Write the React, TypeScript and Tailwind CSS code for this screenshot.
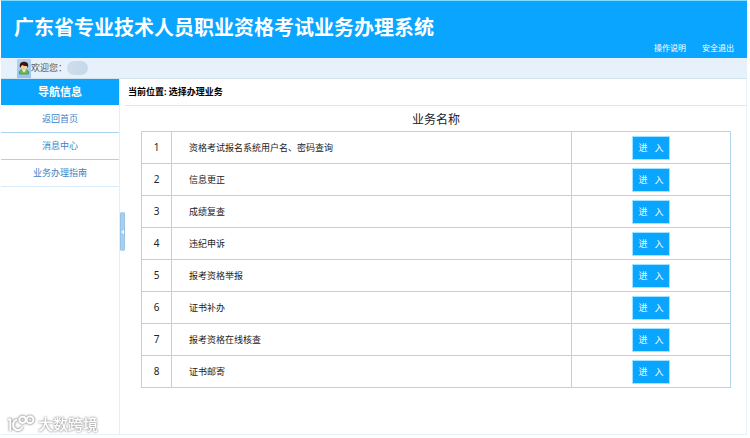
const navItems = ["返回首页", "消息中心", "业务办理指南"];

const services = [
  "资格考试报名系统用户名、密码查询",
  "信息更正",
  "成绩复查",
  "违纪申诉",
  "报考资格举报",
  "证书补办",
  "报考资格在线核查",
  "证书邮寄",
];

function Avatar() {
  return (
    <span className="flex h-[19px] w-[14px] items-center justify-center bg-gradient-to-b from-[#b4d4f6] to-[#98c2f0]">
      <svg viewBox="0 0 12 14" className="h-[14px] w-[12px]" aria-hidden="true">
        <path d="M1.500 13V11c0-1.600 1.800-2.500 4.500-2.500s4.500.9 4.500 2.500v2z" fill="#6cbf45" stroke="#2f7f35" strokeWidth=".6" />
        <path d="M4 9L6 11.500 8 9z" fill="#fff3d8" />
        <ellipse cx="6" cy="6" rx="2.900" ry="3.300" fill="#f8cb98" />
        <path d="M2.200 7C.8 2.800 2.800.8 6 .8s5.200 2 3.800 6.200L9 5C7 5.200 5.300 4.700 4.500 3.900L3 5.200z" fill="#3d150d" />
      </svg>
    </span>
  );
}

function Watermark() {
  return (
    <div className="absolute bottom-[5px] left-[7px] flex items-center gap-[3px] drop-shadow-[0_0_1px_#999]">
      <svg viewBox="0 0 28 18" className="h-[18px] w-[28px]" fill="none" aria-hidden="true">
        <g stroke="#bdbdbd" strokeWidth="2.800">
          <path d="M1 4.500h2.300V16" />
          <path d="M10 4.500C5.500 6 5 11 7.500 13.500s6.500 2 8-1.500" />
          <circle cx="15.500" cy="4.800" r="3.200" />
          <circle cx="23" cy="4.800" r="3.400" />
        </g>
        <g stroke="#fff" strokeWidth="1.800">
          <path d="M1 4.500h2.300V16" />
          <path d="M10 4.500C5.500 6 5 11 7.500 13.500s6.500 2 8-1.500" />
          <circle cx="15.500" cy="4.800" r="3.200" />
          <circle cx="23" cy="4.800" r="3.400" />
        </g>
      </svg>
      <span className="text-[15px] leading-[18px] font-medium text-white [text-shadow:0_0_1px_#aaa]">
        大数跨境
      </span>
    </div>
  );
}

export default function App() {
  return (
    <div className="relative flex min-h-screen flex-col bg-white pr-[3px] pb-[3px] pl-px font-['Noto_Sans','Noto_Sans_CJK_SC',sans-serif] text-[9px] text-[#222]">
      <header className="flex h-[58px] items-stretch justify-between border-t border-[#7fdcff] bg-[#0aa5ff] pr-[13px] pl-[13px] text-white">
        <h1 className="pt-3 text-[20px] leading-[30px] font-bold">
          广东省专业技术人员职业资格考试业务办理系统
        </h1>
        <nav className="flex items-end gap-4 pb-1 text-[8px] leading-[12px]">
          <a href="#help">操作说明</a>
          <a href="#logout">安全退出</a>
        </nav>
      </header>

      <div className="flex h-[21px] items-center border-b border-[#cfe2ec] bg-[#e7f1fb] pl-4 text-[9px] leading-[16px] text-[#555]">
        <Avatar />
        <span>欢迎您：</span>
        <span className="h-[14px] w-[21px] rounded-full bg-gradient-to-r from-[#cfdde9] to-[#c3d9ea]" />
      </div>

      <div className="flex flex-1 border-r border-b border-[#e6f1f9]">
        <aside className="w-[119px] shrink-0 border-r border-[#e0effa]">
          <h2 className="bg-[#0aa5ff] text-center text-[11px] leading-[26px] font-bold text-white">
            导航信息
          </h2>
          <ul className="pt-px">
            {navItems.map((item) => (
              <li key={item} className="border-b border-[#a9d3ee] last:border-[#d8ecfb]">
                <a href="#nav" className="block text-center leading-[26px] text-[#3c7fc4]">
                  {item}
                </a>
              </li>
            ))}
          </ul>
        </aside>

        <div className="w-[5px] shrink-0 pt-[133px]">
          <button
            type="button"
            aria-label="收起导航"
            className="flex h-[39px] w-full items-center justify-center rounded-[2px] border-x border-[#97c3e8] bg-[#a8cff0]"
          >
            <svg viewBox="0 0 3 4" className="h-[4px] w-[3px]" aria-hidden="true">
              <path d="M3 0v4L0 2z" fill="#fff" />
            </svg>
          </button>
        </div>

        <main className="min-w-0 flex-1">
          <div className="border-b border-[#e1e4e8] pl-[3px] leading-[26px] font-bold text-black">
            当前位置: 选择办理业务
          </div>
          <div className="pt-1 pr-[15px] pb-4 pl-4">
            <table className="w-full table-fixed border-collapse">
              <caption className="text-[12px] leading-5 pb-px">业务名称</caption>
              <colgroup>
                <col className="w-[30px]" />
                <col />
                <col className="w-[27%]" />
              </colgroup>
              <tbody>
                {services.map((name, i) => (
                  <tr key={name} className="h-8">
                    <td className="border border-[#b0d6ea] text-center text-[10px]">{i + 1}</td>
                    <td className="border border-[#b0d6ea] pl-[17px]">{name}</td>
                    <td className="border border-[#b0d6ea]">
                      <button
                        type="button"
                        className="mx-auto block h-6 w-[38px] border border-[#9fe3ff] bg-[#0aa5ff] text-center whitespace-pre text-white"
                      >
                        进{"\u00a0\u00a0\u00a0"}入
                      </button>
                    </td>
                  </tr>
                ))}
              </tbody>
            </table>
          </div>
        </main>
      </div>

      <Watermark />
    </div>
  );
}
